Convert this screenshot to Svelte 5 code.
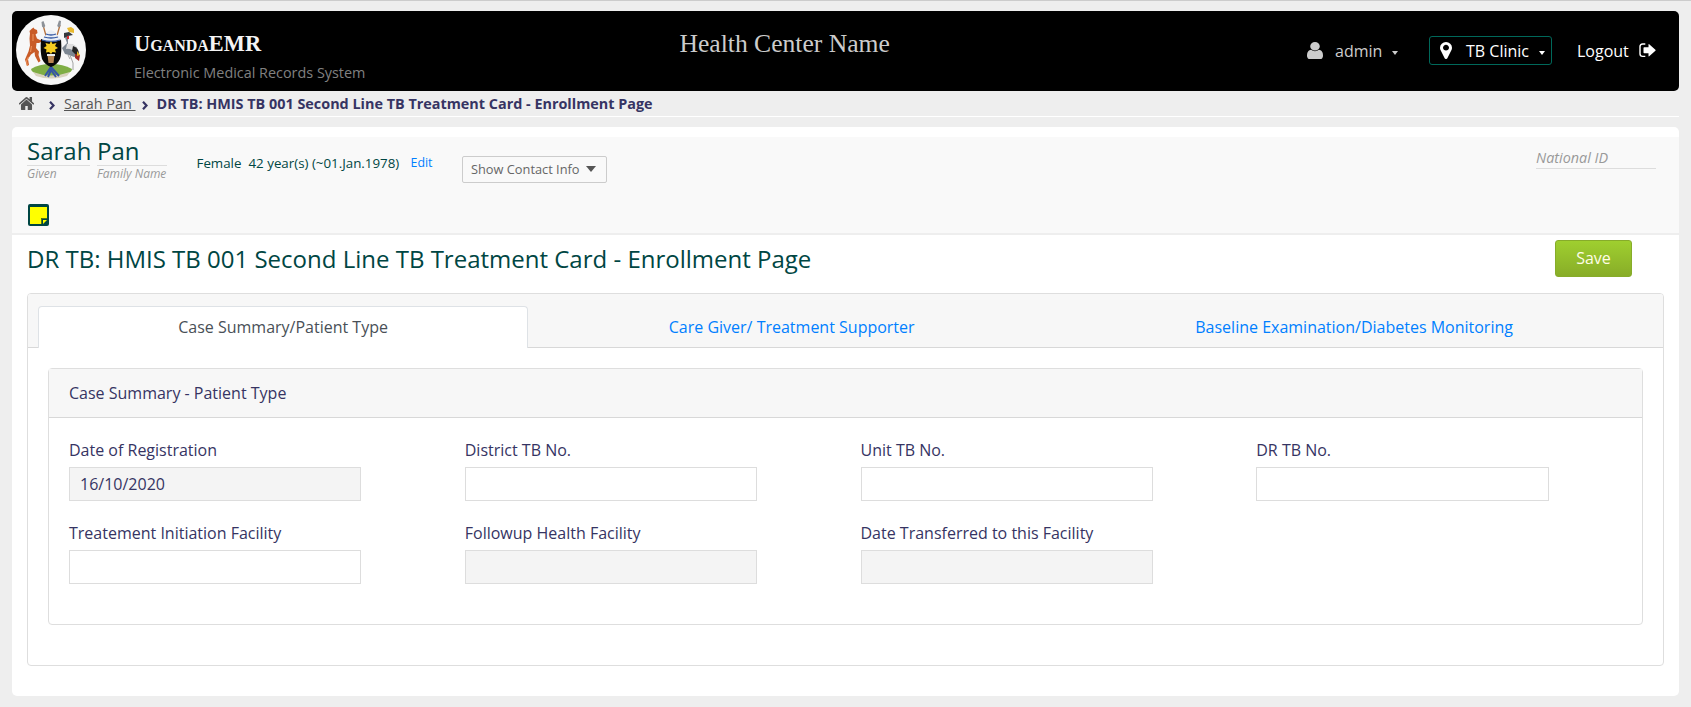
<script>
  const tabs = [
    { label: 'Case Summary/Patient Type', grow: 490, active: true },
    { label: 'Care Giver/ Treatment Supporter', grow: 527 },
    { label: 'Baseline Examination/Diabetes Monitoring', grow: 598 }
  ];
  const fields = [
    { label: 'Date of Registration', value: '16/10/2020', locked: true },
    { label: 'District TB No.', value: '' },
    { label: 'Unit TB No.', value: '' },
    { label: 'DR TB No.', value: '' },
    { label: 'Treatement Initiation Facility', value: '' },
    { label: 'Followup Health Facility', value: '', locked: true },
    { label: 'Date Transferred to this Facility', value: '', locked: true }
  ];
</script>

<div class="page">
  <header>
    <svg class="logo" viewBox="0 0 70 70">
      <circle cx="35" cy="35" r="35" fill="#f7f7f7" />
      <path d="M27 10L40 56M44 10L31 56" stroke="#b5713d" stroke-width="1.3" />
      <path d="M25.500 7l2-1 1.800 5-1.600 2-1.700-1.500zM45 6l-2-.5-1.800 5.500 1.600 1.500 1.700-1.500z" fill="#8d9298" />
      <path d="M15 54q8-5 20-5t21 5q0 6-21 7-19-1-20-7z" fill="#7fae45" />
      <path d="M17 57q18 7 37 0l-3 4q-16 5-31 0z" fill="#d9d3bd" />
      <path d="M29 61l6-9 8 9M32 62l3-7 5 7" fill="none" stroke="#3656a5" stroke-width="2" />
      <path d="M13.500 16l2-2 2-1.500 1 1.500 2.500 1 .5 3-2 1.500 1.500 4 3 1.500 2-.5 0 2-3 1.500-2.500 0-.5 5 3 3.500-.5 3.500 2 6-2 1.500-3.500-6.500-.5-4-3.500 2.500-3 4.500 1 6-2 1-2-6.500 3.500-8 1.500-6-.5-7 .5-5z" fill="#c95c28" />
      <path d="M17 19l0 7M15.500 31l-1 6M12.500 42l-2 4 1 5" fill="none" stroke="#e98d55" stroke-width="1.200" />
      <path d="M49 21q4-1 3 5l0 4q6-2 9 3l1 8-4 1-5-2-4-1-3-6 5-5q-2-4-2-7z" fill="#7d8792" />
      <path d="M51 29q8-1 11 5l-2 5q-4-6-10-5z" fill="#dedede" />
      <path d="M57 31q6 2 6 8l-2 2-5-5z" fill="#252525" />
      <path d="M59 39l5 1-1 6-4-3z" fill="#a42d26" />
      <path d="M61 36l3 4-3 1z" fill="#e6b52a" />
      <path d="M54 40l3 8 0 7M52 40l2 4" fill="none" stroke="#999" stroke-width=".9" />
      <path d="M51 13l2 4 5 1 0-4-3-2z" fill="#e8b92e" />
      <path d="M48 18l5-1 4 3-5 1-4 2z" fill="#34383d" />
      <path d="M51 21h2v3h-2z" fill="#d62c30" />
      <path d="M25 24q10 4 20 0 1 14-1 20-3 6-9 8-6-2-9-8-2-7-1-20z" fill="#080808" />
      <path d="M26 25q1-3 4-5 1-4 5-5 4 1 5 4 4 2 5 6-9 3-19 0z" fill="#e8edf5" />
      <path d="M30 19q5 2 10 0M28 22q7 2 14 0M26 25q9 3 18 0" fill="none" stroke="#3558a3" stroke-width="1.300" />
      <path d="M35 26l1.500 3 4-1-1.500 3 3 2-3 1.500 1 3-3.500-.5-1.500 2-2-2-3 .5.500-3-3-1.500 3-2-1-3 4 1z" fill="#f4cc22" />
      <path d="M31.500 40h7l-1 8h-5z" fill="#b98552" /><path d="M31 39h8v2h-8z" fill="#eee" />
    </svg>
    <div class="brand">
      <div class="brand-name">UgandaEMR</div>
      <div class="brand-sub">Electronic Medical Records System</div>
    </div>
    <div class="center-name">Health Center Name</div>
    <div class="user-area">
      <svg class="user-icon" viewBox="256 128 1280 1536" preserveAspectRatio="none"><path d="M1536 1399q0 109-62.500 187t-150.500 78h-854q-88 0-150.500-78t-62.500-187q0-85 8.500-160.500t31.500-152 58.500-131 94-89 134.500-34.500q131 128 313 128t313-128q76 0 134.500 34.500t94 89 58.500 131 31.500 152 8.500 160.500zm-256-887q0 159-112.500 271.500t-271.500 112.500-271.500-112.500-112.500-271.500 112.500-271.500 271.500-112.500 271.500 112.500 112.500 271.500z" /></svg>
      <span class="user">admin</span><i class="caret"></i>
    </div>
    <div class="location">
      <svg class="pin" viewBox="384 128 1024 1536" preserveAspectRatio="none"><path d="M1152 640q0-106-75-181t-181-75-181 75-75 181 75 181 181 75 181-75 75-181zm256 0q0 109-33 179l-364 774q-16 33-47.500 52t-67.500 19-67.500-19-46.500-52l-365-774q-33-70-33-179 0-212 150-362t362-150 362 150 150 362z" /></svg>
      <span>TB Clinic</span><i class="caret"></i>
    </div>
    <div class="logout">
      <span>Logout</span>
      <svg viewBox="0 0 17 15"><path d="M6.300 1H3.600Q1 1 1 3.600v7.200Q1 13.400 3.600 13.400h2.700" fill="none" stroke="#fff" stroke-width="1.400" /><path d="M4.500 5q0-.7.7-.7H9.500V1.800q0-1.200 1-.4l5.900 5.300q.6.500 0 1l-5.900 5.400q-1 .8-1-.4V10.200H5.200q-.7 0-.7-.7z" fill="#fff" /></svg>
    </div>
  </header>

  <nav class="crumbs">
    <svg class="home" viewBox="53 253 1558 1283" preserveAspectRatio="none"><path d="M1408 992v480q0 26-19 45t-45 19h-384v-384h-256v384h-384q-26 0-45-19t-19-45v-480q0-1 .5-3t.5-3l575-474 575 474q1 2 1 6zm223-69l-62 74q-8 9-21 11h-3q-13 0-21-7l-692-577-692 577q-12 8-24 7-13-2-21-11l-62-74q-8-10-7-23.500t11-21.500l719-599q32-26 76-26t76 26l244 204v-195q0-14 9-23t23-9h192q14 0 23 9t9 23v408l219 182q10 8 11 21.500t-7 23.500z" /></svg>
    <svg class="chev" viewBox="0 0 6 9"><path d="M1 .8l3.500 3.700L1 8.200" /></svg>
    <span class="crumb-link">Sarah Pan&nbsp;</span>
    <svg class="chev second" viewBox="0 0 6 9"><path d="M1 .8l3.500 3.700L1 8.200" /></svg>
    <b>DR TB: HMIS TB 001 Second Line TB Treatment Card - Enrollment Page</b>
  </nav>

  <main>
    <section class="patient">
      <div class="patient-row">
        <div class="name given"><span>Sarah</span><em>Given</em></div>
        <div class="name family"><span>Pan</span><em>Family Name</em></div>
        <div class="demo"><span class="gender">Female</span><span class="age">42 year(s) (~01.Jan.1978)</span><a href="#edit">Edit</a></div>
        <button class="contact"><span>Show Contact Info</span><i></i></button>
        <div class="national">National ID</div>
      </div>
      <svg class="note" viewBox="0 0 21 22"><rect width="21" height="22" rx="2" fill="#004643" /><path d="M2 3h17v11h-6v6H2z" fill="#ff0" /><path d="M15 16h4l-4 4z" fill="#ff0" /><path d="M13.500 20v-5.500h5.500" fill="none" stroke="#56780e" /></svg>
    </section>

    <div class="title-row">
      <h2>DR TB: HMIS TB 001 Second Line TB Treatment Card - Enrollment Page</h2>
      <button class="save">Save</button>
    </div>

    <section class="card">
      <div class="tabs">
        {#each tabs as tab}
          <div class="tab" class:active={tab.active} style="flex-grow: {tab.grow}">{tab.label}</div>
        {/each}
      </div>
      <div class="inner">
        <div class="inner-head">Case Summary - Patient Type</div>
        <div class="grid">
          {#each fields as f}
            <label class="field"><span>{f.label}</span><input type="text" value={f.value} readonly={f.locked} class:locked={f.locked} /></label>
          {/each}
        </div>
      </div>
    </section>
  </main>
</div>

<style>
  :global(body) { background: #eee; }
  * { box-sizing: border-box; }
  .page { font-family: 'Open Sans', sans-serif; font-size: 16px; color: #363463; height: 707px; padding: 10px 12px 0; border-top: 1px solid #ccc; overflow: hidden; }
  svg { display: block; flex: none; }
  header { height: 80px; background: #000; border-radius: 5px; display: flex; align-items: flex-start; color: #fff; }
  .logo { width: 70px; height: 70px; margin: 4px 48px 0 4px; }
  .brand { width: 546px; padding-top: 17px; white-space: nowrap; }
  .brand-name { font: bold 22.400px/32px 'Liberation Serif', serif; font-variant: small-caps; color: #f4f4f4; }
  .brand-sub { font-size: 14.400px; line-height: 20px; color: #808080; margin-top: 3px; }
  .center-name { width: 627px; font: 25.600px/30px 'Liberation Serif', serif; padding-top: 18px; color: #ccc; margin-left: -.5px; margin-right: .5px; }
  .user-area { display: flex; align-items: center; width: 122px; height: 29px; margin-top: 25px; color: #ccc; }
  .user-icon { width: 16px; height: 17px; margin-right: 12px; fill: #ccc; }
  .user { width: 47px; }
  .caret { width: 0; height: 0; border: 3.500px solid transparent; border-top: 4px solid currentColor; border-bottom: 0; margin: 4px 0 0 10px; }
  .location { display: flex; align-items: center; width: 123px; height: 29px; margin-top: 25px; border: 1px solid #00685a; border-radius: 3px; padding-left: 10px; white-space: nowrap; }
  .location span { width: 63px; }
  .pin { width: 12px; height: 17px; margin-right: 14px; fill: #fff; }
  .logout { display: flex; align-items: center; height: 29px; margin: 25px 0 0 25px; }
  .logout span { width: 62px; }
  .logout svg { width: 17px; height: 15px; margin-top: -1px; }

  .crumbs { height: 26px; border-bottom: 1px solid #fff; display: flex; align-items: center; font-size: 14.400px; line-height: 20px; padding: 0 0 0 7px; white-space: nowrap; }
  .home { width: 15px; height: 13px; margin: -1px 15px 0 0; fill: #555; }
  .chev { width: 6px; height: 9px; margin: 3px 9px 0 0; fill: none; stroke: #363463; stroke-width: 2.200; }
  .chev.second { margin-left: 5.500px; margin-right: 9px; }
  .crumb-link { width: 72px; color: #555; text-decoration: underline; }

  main { margin-top: 10px; height: 569px; background: #fff; border-radius: 5px; padding-top: 10px; }
  .patient { height: 98px; background: #f9f9f9; border-bottom: 2px solid #eee; padding-left: 15px; }
  .patient-row { display: flex; align-items: flex-start; height: 67px; color: #004643; white-space: nowrap; }
  .name { display: flex; flex-direction: column; }
  .name span { font-size: 24px; line-height: 28px; height: 29px; border-bottom: 1px solid #ddd; }
  .name em { font-size: 12px; line-height: 16px; color: #999; }
  .given { width: 63px; margin-right: 7px; }
  .family { width: 70px; }
  .demo { display: flex; margin: 16px 0 0 29.500px; font-size: 13.330px; line-height: 20px; width: 265.500px; }
  .gender { width: 52px; }
  .age { width: 162px; }
  .demo a { color: #007fff; text-decoration: none; font-size: 12.400px; }
  .contact { display: flex; align-items: center; width: 145px; height: 27px; margin-top: 19px; padding: 0 0 2px 8px; background: #f9f9f9; border: 1px solid #ccc; border-radius: 2px; color: #666; font: 12.800px 'Open Sans', sans-serif; }
  .contact span { width: 115px; text-align: left; }
  .contact i { border: 5px solid transparent; border-top: 6px solid #555; border-bottom: 0; margin-top: 0; }
  .national { margin: 10px 23px 0 auto; width: 120px; height: 22px; border-bottom: 1px solid #ddd; color: #999; font-style: italic; font-size: 14.400px; line-height: 22px; }
  .note { width: 21px; height: 22px; margin-left: 1px; }

  .title-row { display: flex; justify-content: space-between; height: 58px; padding: 5px 47px 0 15px; }
  h2 { margin: 0; font-size: 24px; line-height: 38px; font-weight: 400; color: #004643; }
  .save { width: 77px; height: 37px; border: 1px solid #87ac2a; border-radius: 3px; background: linear-gradient(#9fcf2f, #88ad28); color: #fffde6; font: 16px 'Open Sans', sans-serif; padding: 0 0 2px; }

  .card { margin: 0 15px; height: 373px; border: 1px solid #dedede; border-radius: 4px; }
  .tabs { display: flex; height: 54px; padding: 12px 10px 0; background: #f7f7f7; border-bottom: 1px solid #d8d8d8; border-radius: 3px 3px 0 0; }
  .tab { flex-basis: 0; height: 42px; padding-top: 8px; line-height: 24px; text-align: center; color: #007fff; border: 1px solid transparent; border-bottom: 0; }
  .tab.active { color: #495057; background: #fff; border-color: #dee2e6; border-radius: 4px 4px 0 0; }
  .inner { margin: 20px; height: 257px; border: 1px solid #dedede; border-radius: 4px; }
  .inner-head { height: 49px; padding: 12px 20px; line-height: 24px; background: #f7f7f7; border-bottom: 1px solid #d8d8d8; }
  .grid { display: grid; grid-template-columns: repeat(4, 395.750px); grid-auto-rows: 83px; padding: 20px 0 0 20px; }
  .field { display: block; }
  .field span { display: block; line-height: 24px; margin-bottom: 5px; }
  input { display: block; width: 292.300px; height: 34px; border: 1px solid #ddd; border-radius: 0; background: #fff; color: #363463; padding: 0 10px; font: 16px 'Open Sans', sans-serif; outline: none; }
  input.locked { background: #f4f4f4; }
</style>
